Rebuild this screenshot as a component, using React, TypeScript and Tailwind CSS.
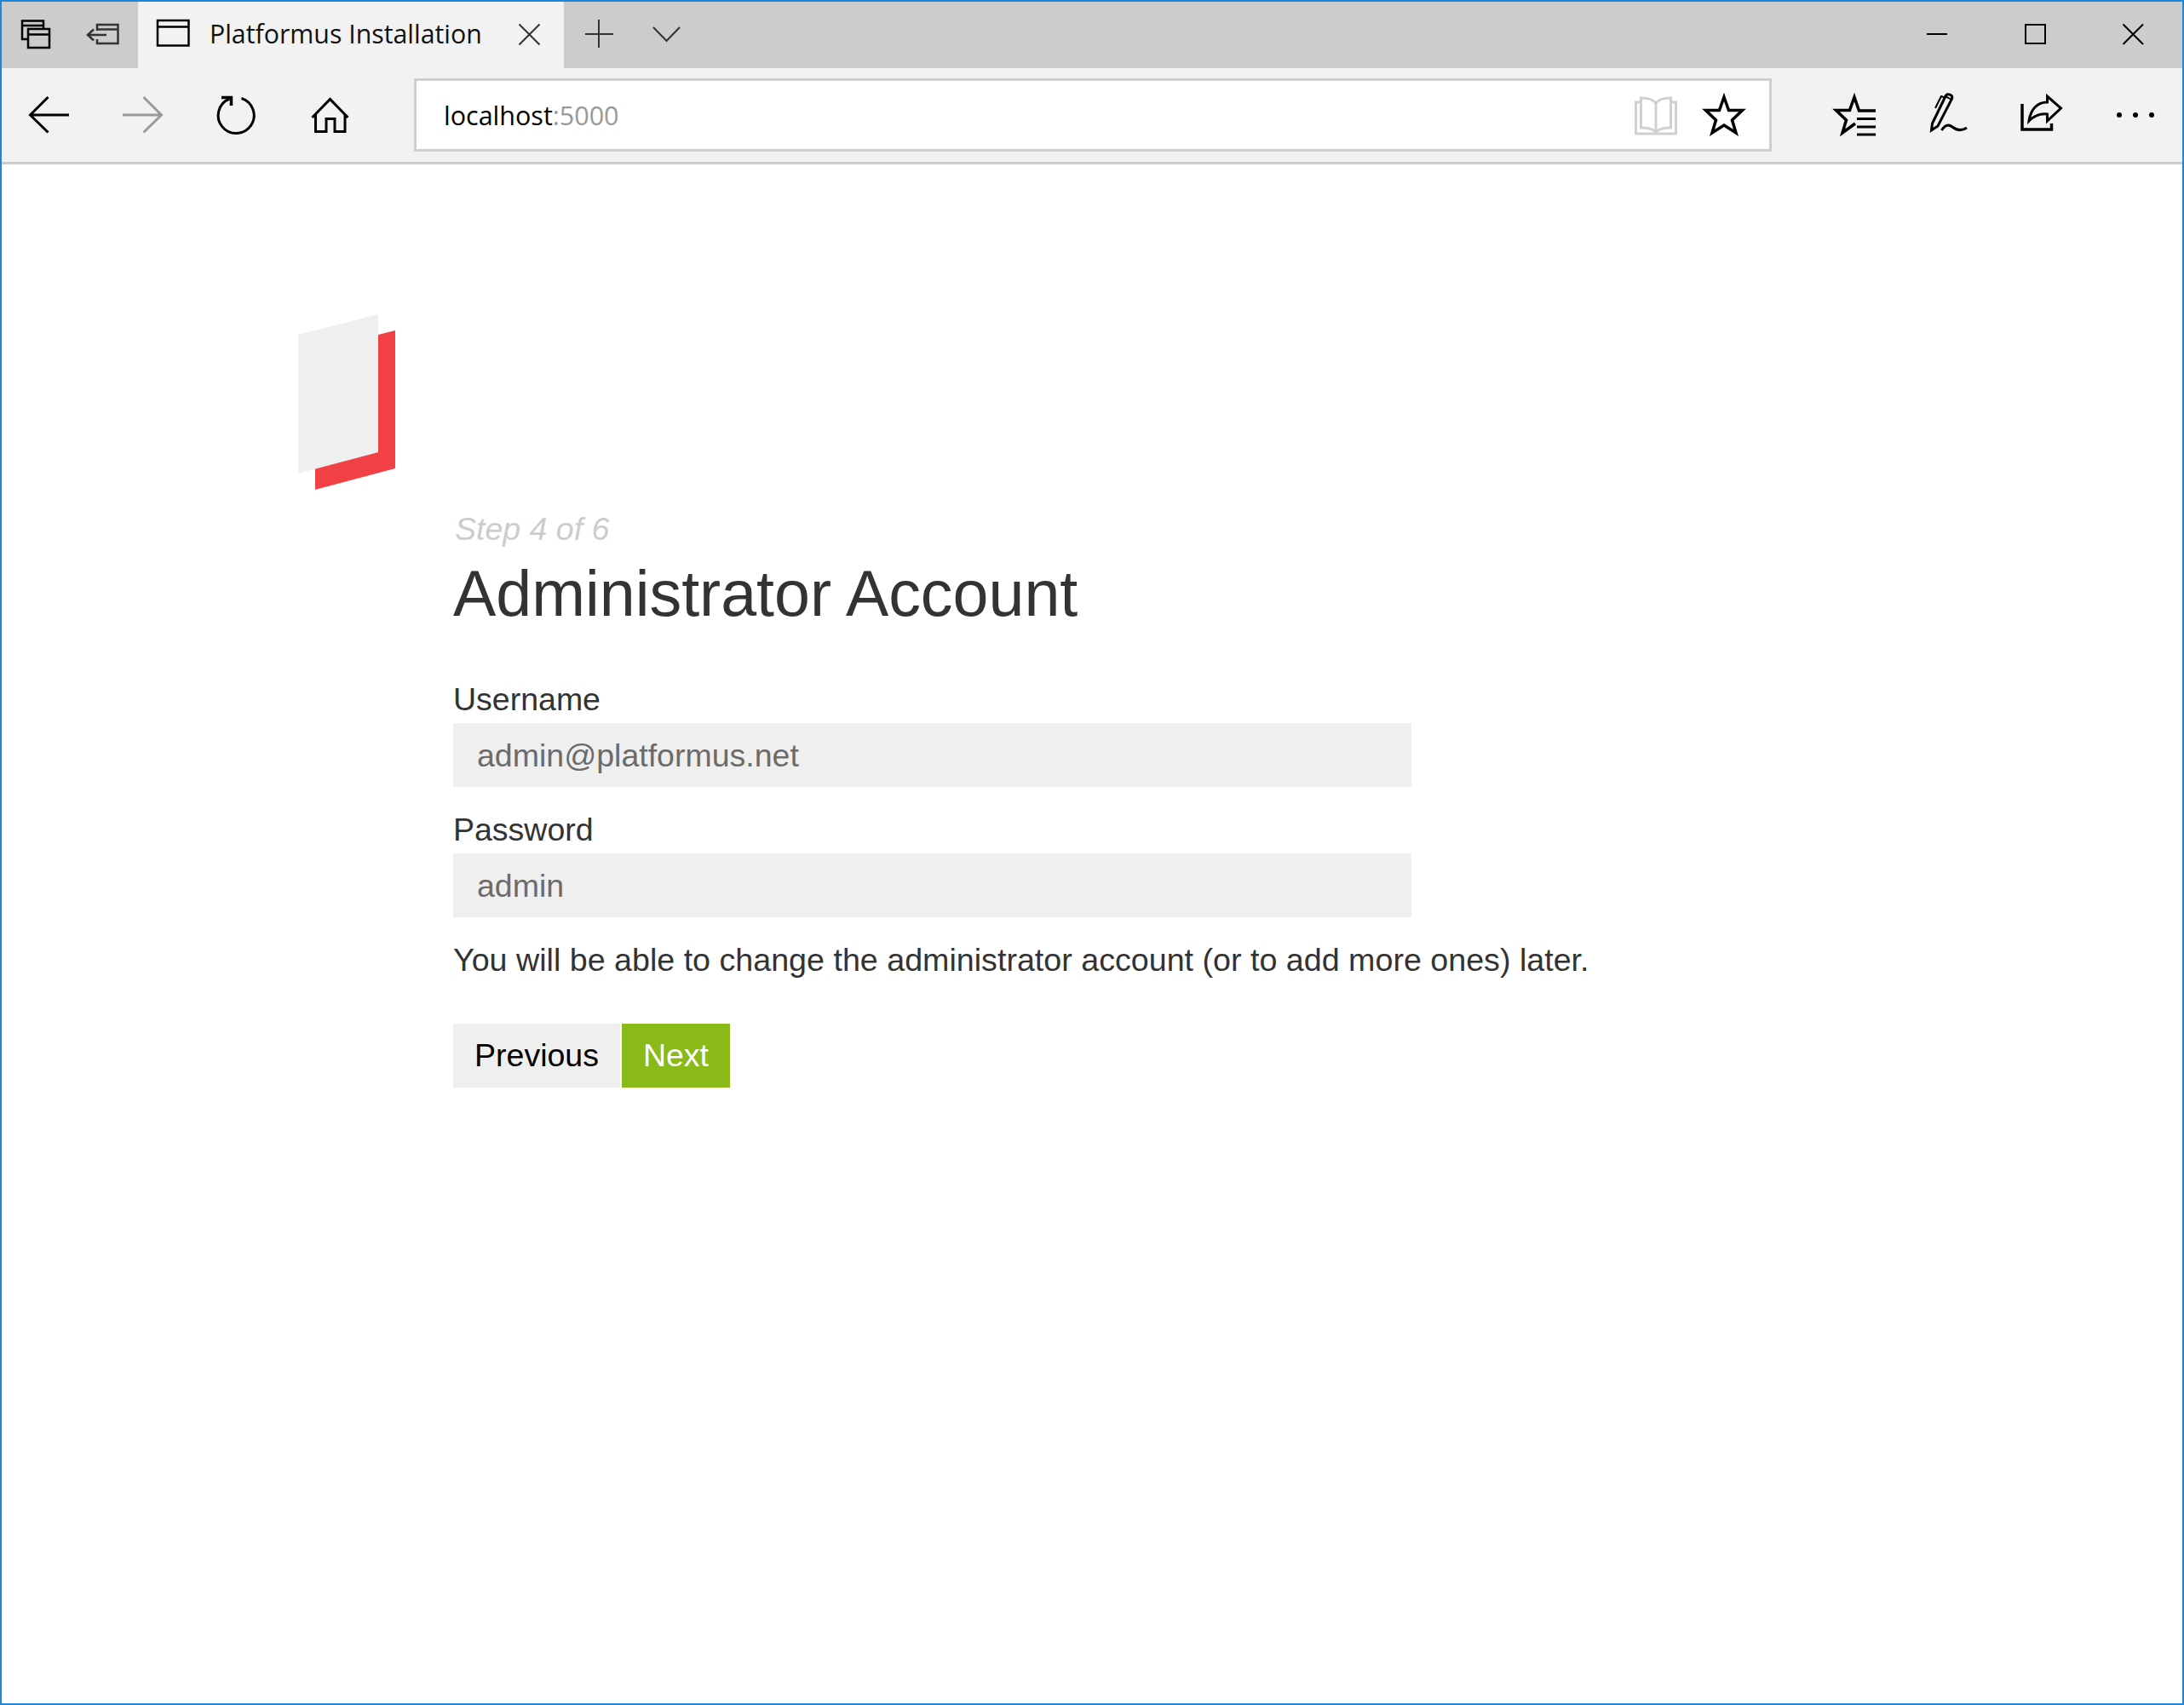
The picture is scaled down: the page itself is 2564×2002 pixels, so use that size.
const stroke = { fill: 'none', stroke: 'currentColor', strokeWidth: 2.5, strokeLinecap: 'butt' as const };

function TabsAsideIcon() {
  return (
    <svg viewBox="2 2 80 78" className="h-[78px] w-[80px] text-black">
      <path {...stroke} d="M32 46 H26 V24.5 H51 V33 M26 30 H51" />
      <rect {...stroke} x="33" y="34" width="25" height="22" />
      <path {...stroke} d="M33 40.5 H58" />
    </svg>
  );
}

function SetAsideIcon() {
  return (
    <svg viewBox="82 2 80 78" className="h-[78px] w-[80px] text-[#333]">
      <path {...stroke} d="M114 36 V29 H138.500 V51 H114 V46 M114 34.500 H138.500" />
      <path {...stroke} d="M125 41 H103 M110 34.500 L103 41 L110 47.500" />
    </svg>
  );
}

function PageIcon() {
  return (
    <svg viewBox="162 2 84 78" className="h-[78px] w-[84px] shrink-0 text-black">
      <rect {...stroke} x="185" y="24" width="36.500" height="29.500" />
      <path {...stroke} d="M185 31.500 H221.500" />
    </svg>
  );
}

function CloseTabIcon() {
  return (
    <svg viewBox="590 2 72 78" className="h-[78px] w-[72px] shrink-0 text-[#333]">
      <path {...stroke} strokeWidth={2} d="M609.500 28.500 L633.500 52.500 M633.500 28.500 L609.500 52.500" />
    </svg>
  );
}

function PlusIcon() {
  return (
    <svg viewBox="662 2 82 78" className="h-[78px] w-[82px] text-[#333]">
      <path {...stroke} strokeWidth={2} d="M703 23 V56 M687 40 H720" />
    </svg>
  );
}

function ChevronIcon() {
  return (
    <svg viewBox="744 2 78 78" className="h-[78px] w-[78px] text-[#333]">
      <path {...stroke} strokeWidth={2} d="M767 32 L782.500 48 L798 32" />
    </svg>
  );
}

function MinimizeIcon() {
  return (
    <svg viewBox="2217 2 115 78" className="h-[78px] w-[115px] text-black">
      <path {...stroke} strokeWidth={2} d="M2262 40 H2286" />
    </svg>
  );
}

function MaximizeIcon() {
  return (
    <svg viewBox="2332 2 115 78" className="h-[78px] w-[115px] text-black">
      <rect {...stroke} strokeWidth={2} x="2378" y="29" width="23" height="22" />
    </svg>
  );
}

function CloseIcon() {
  return (
    <svg viewBox="2447 2 115 78" className="h-[78px] w-[115px] text-black">
      <path {...stroke} strokeWidth={2} d="M2492.500 28.500 L2516 52 M2516 28.500 L2492.500 52" />
    </svg>
  );
}

function BackIcon() {
  return (
    <svg viewBox="2 80 110 110" className="h-[110px] w-[110px] text-black">
      <path {...stroke} strokeWidth={3} d="M81 135 H36 M56.500 114 L35.500 135 L56.500 155.500" />
    </svg>
  );
}

function ForwardIcon() {
  return (
    <svg viewBox="112 80 110 110" className="h-[110px] w-[110px] text-[#999]">
      <path {...stroke} strokeWidth={3} d="M144 135 H189 M168.500 114 L189.500 135 L168.500 155.500" />
    </svg>
  );
}

function RefreshIcon() {
  return (
    <svg viewBox="222 80 110 110" className="h-[110px] w-[110px] text-black">
      <path {...stroke} strokeWidth={3} d="M283.500 115.500 A21 21 0 1 1 269.500 116" />
      <path {...stroke} strokeWidth={3.5} d="M260 114.500 H271.500 V124" />
    </svg>
  );
}

function HomeIcon() {
  return (
    <svg viewBox="332 80 110 110" className="h-[110px] w-[110px] text-black">
      <path {...stroke} strokeWidth={3} d="M366.500 138 L387.500 116.500 L408.500 138" />
      <path {...stroke} strokeWidth={3} d="M370.500 134 V154.500 H383 V139.500 H393 V154.500 H405 V134" />
    </svg>
  );
}

function BookIcon() {
  return (
    <svg viewBox="1904 95 80 80" className="h-[80px] w-[80px] shrink-0 text-[#d0d0d0]">
      <path {...stroke} strokeWidth={3} d="M1926 120 H1920.500 V157 H1967.500 V120 H1962" />
      <path {...stroke} strokeWidth={3} d="M1944 121 C1940 116 1932 115 1926.500 115 V150 C1932 150 1940 151 1944 155 C1948 151 1956 150 1961.500 150 V115 C1956 115 1948 116 1944 121 V155" />
    </svg>
  );
}

function StarIcon() {
  return (
    <svg viewBox="1984 95 80 80" className="h-[80px] w-[80px] shrink-0 text-black">
      <path {...stroke} strokeWidth={3.5} d="M2024 114 L2029.500 129.500 H2045.500 L2033.500 141 L2038 156 L2024 147 L2010 156 L2014.500 141 L2002.500 129.500 H2018.500 Z" />
    </svg>
  );
}

function FavoritesIcon() {
  return (
    <svg viewBox="2122 80 110 110" className="h-[110px] w-[110px] text-black">
      <path {...stroke} strokeWidth={3.5} d="M2202 130 H2182.500 L2177 114 L2171.500 129.500 H2155.500 L2167.500 141 L2163 156 L2178 145" />
      <path {...stroke} strokeWidth={3} d="M2180 139.500 H2202 M2180 149 H2202 M2180 158 H2202" />
    </svg>
  );
}

function PenIcon() {
  return (
    <svg viewBox="2232 80 110 110" className="h-[110px] w-[110px] text-black">
      <path {...stroke} strokeWidth={3} d="M2267.500 153 L2268.500 145 L2284 113 C2286 109 2293 111 2291.500 116 L2275 148 Z" />
      <path {...stroke} strokeWidth={2} d="M2272 127 L2279 113 L2284 115 M2284 113 L2291 117" />
      <path {...stroke} strokeWidth={3} d="M2279.500 153 C2284 146 2288 146 2292 149 C2297 153 2303 154 2309 150" />
    </svg>
  );
}

function ShareIcon() {
  return (
    <svg viewBox="2342 80 110 110" className="h-[110px] w-[110px] text-black">
      <path {...stroke} strokeWidth={3.5} d="M2374 122 V152 H2408.500 V145" />
      <path {...stroke} strokeWidth={3} d="M2382 142 C2384 128 2392 120 2403.500 120 V113 L2419.500 127 L2403.500 142 V134 C2395 133 2388 136 2382 142 Z" />
    </svg>
  );
}

function MoreIcon() {
  return (
    <svg viewBox="2452 80 110 110" className="h-[110px] w-[110px] text-black">
      <circle cx="2488" cy="135" r="3" fill="currentColor" />
      <circle cx="2507" cy="135" r="3" fill="currentColor" />
      <circle cx="2526" cy="135" r="3" fill="currentColor" />
    </svg>
  );
}

function Logo() {
  return (
    <svg viewBox="350 369 114 206" className="ml-[348px] block h-[206px] w-[114px]">
      <path fill="#f14144" d="M444 393 L464 388 V550 L370 575 V500 H444 Z" />
      <path fill="#efefef" d="M350 393 L444 369 V531 L350 556 Z" />
    </svg>
  );
}

function Field({ label, value }: { label: string; value: string }) {
  return (
    <div className="mb-[26px]">
      <label className="mb-[5px] block pt-[2px] text-[37.5px] leading-[45px] text-[#333]">{label}</label>
      <input
        readOnly
        value={value}
        className="block h-[75px] w-[1125px] bg-[#efefef] px-[28px] pt-[1px] text-[37.5px] text-[#6b6b6b] outline-none"
      />
    </div>
  );
}

export default function App() {
  return (
    <div className="box-border flex h-[2002px] w-[2564px] flex-col border-2 border-[#1f87d8] bg-white font-['Liberation_Sans',Arial,sans-serif]">
      <div className="flex h-[78px] shrink-0 bg-[#cccccc]">
        <TabsAsideIcon />
        <SetAsideIcon />
        <div className="flex w-[500px] items-center bg-[#f2f2f2]">
          <PageIcon />
          <span className="flex-1 pb-[2px] font-['Open_Sans',sans-serif] text-[30.3px] leading-none text-[#111]">
            Platformus Installation
          </span>
          <CloseTabIcon />
        </div>
        <PlusIcon />
        <ChevronIcon />
        <div className="ml-auto flex">
          <MinimizeIcon />
          <MaximizeIcon />
          <CloseIcon />
        </div>
      </div>

      <div className="flex h-[113px] shrink-0 border-b-[3px] border-[#cccccc] bg-[#f2f2f2]">
        <BackIcon />
        <ForwardIcon />
        <RefreshIcon />
        <HomeIcon />
        <div className="ml-[44px] mt-[12px] box-border flex h-[86px] w-[1594px] items-center border-[3px] border-[#cfcfcf] bg-white pl-[32px] pr-[13px]">
          <span className="flex-1 font-['Open_Sans',sans-serif] text-[30.5px] leading-none text-black">
            localhost<span className="text-[#999]">:5000</span>
          </span>
          <BookIcon />
          <StarIcon />
        </div>
        <div className="ml-[42px] flex">
          <FavoritesIcon />
          <PenIcon />
          <ShareIcon />
          <MoreIcon />
        </div>
      </div>

      <main className="pt-[176px]">
        <Logo />
        <div className="ml-[530px] mt-[24px]">
          <div className="pl-[2px] text-[37.5px] italic leading-[45px] text-[#ccc]">Step 4 of 6</div>
          <h1 className="mt-[8px] mb-[55px] text-[75.4px] font-normal leading-[90px] text-[#333]">Administrator Account</h1>
          <Field label="Username" value="admin@platformus.net" />
          <Field label="Password" value="admin" />
          <p className="pt-[2px] text-[37.65px] leading-[45px] text-[#333]">
            You will be able to change the administrator account (or to add more ones) later.
          </p>
          <div className="mt-[52px] flex gap-[2px]">
            <button className="h-[75px] w-[196px] bg-[#efefef] text-[37.5px] text-black">Previous</button>
            <button className="h-[75px] w-[127px] bg-[#8aba18] text-[37.5px] text-white">Next</button>
          </div>
        </div>
      </main>
    </div>
  );
}
